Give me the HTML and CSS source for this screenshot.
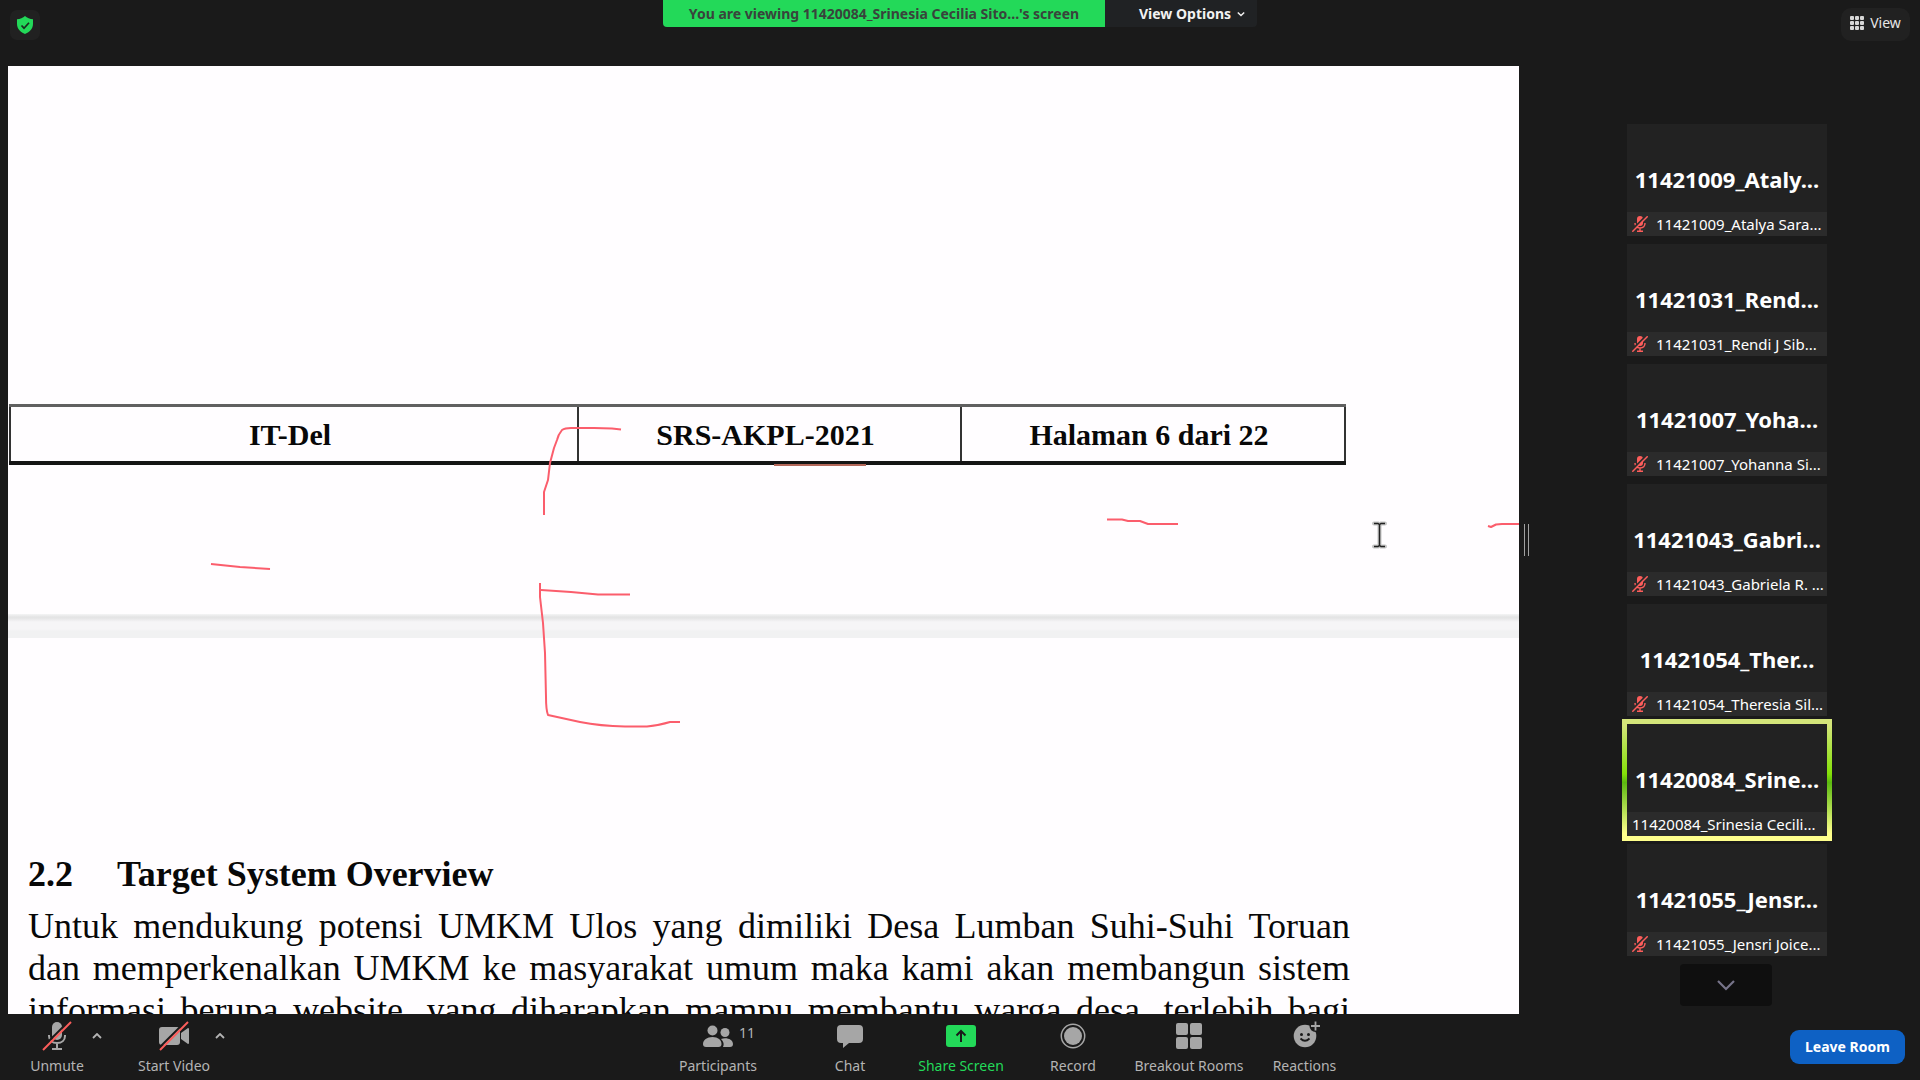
FILE: index.html
```html
<!DOCTYPE html>
<html lang="en">
<head>
<meta charset="utf-8">
<meta name="viewport" content="width=device-width, initial-scale=1">
<title>Meeting</title>
<link rel="stylesheet" href="styles.css">
</head>
<body>
<svg class="defs" aria-hidden="true">
  <symbol id="muted" viewBox="0 0 16 16">
    <rect x="5" y="0" width="6" height="10" rx="3" fill="#fc5d5b"/>
    <path d="M3 7c0 3 2 5 5 5s5-2 5-5M8 12v3M5 15.2h6" fill="none" stroke="#fc5d5b" stroke-width="1.4"/>
    <path d="M-1 15L15-1" stroke="#2b2b2b" stroke-width="2"/>
    <path d="M.3 15.7L15.7.3" stroke="#fc5d5b" stroke-width="1.5"/>
  </symbol>
  <symbol id="caret" viewBox="0 0 10 6">
    <path d="M1 5l4-4 4 4" fill="none" stroke="currentColor" stroke-width="1.8"/>
  </symbol>
</svg>

<header class="topbar">
  <button class="shield" type="button" aria-label="Meeting information">
    <svg width="16" height="18" viewBox="0 0 16 18"><path d="M8 0C10 2 13 3 16 3.3V8c0 5-4 8.500-8 10C4 16.500 0 13 0 8V3.300C3 3 6 2 8 0z" fill="#23d959"/><path d="M4.500 9.500l2.500 2.700 5-5.500" fill="none" stroke="#1a2a1e" stroke-width="1.700"/></svg>
  </button>
  <div class="banner">
    <div class="banner-text">You are viewing 11420084_Srinesia Cecilia Sito...'s screen</div>
    <button class="banner-options" type="button">View Options
      <svg class="flip" width="8" height="6"><use href="#caret"/></svg>
    </button>
  </div>
  <button class="view" type="button">
    <svg width="14" height="14" viewBox="0 0 14 14" fill="#d6d6d6"><rect width="4" height="4" rx="1"/><rect x="5" width="4" height="4" rx="1"/><rect x="10" width="4" height="4" rx="1"/><rect y="5" width="4" height="4" rx="1"/><rect x="5" y="5" width="4" height="4" rx="1"/><rect x="10" y="5" width="4" height="4" rx="1"/><rect y="10" width="4" height="4" rx="1"/><rect x="5" y="10" width="4" height="4" rx="1"/><rect x="10" y="10" width="4" height="4" rx="1"/></svg>
    View
  </button>
</header>

<main class="stage">
  <section class="shared" aria-label="Shared screen">
    <div class="page-end">
      <table class="footer-table">
        <tr><td class="org">IT-Del</td><td class="code">SRS-AKPL-2021</td><td>Halaman 6 dari 22</td></tr>
      </table>
    </div>
    <div class="page-gap"></div>
    <article class="page-start">
      <h2 class="heading"><span>2.2</span><span>Target System Overview</span></h2>
      <p class="para">
        <span class="line">Untuk mendukung potensi UMKM Ulos yang dimiliki Desa Lumban Suhi-Suhi Toruan</span>
        <span class="line">dan memperkenalkan UMKM ke masyarakat umum maka kami akan membangun sistem</span>
        <span class="line">informasi berupa website, yang diharapkan mampu membantu warga desa, terlebih bagi</span>
      </p>
    </article>
    <svg class="ink" width="1511" height="948" viewBox="8 66 1511 948" aria-hidden="true">
      <g fill="none" stroke="#fb5d6c" stroke-width="2" stroke-linejoin="round">
        <path d="M621 429.500L612 428.500L594 428H571Q565 428 562 430Q558 435 557 440L554 448L550 463L548 480L544 492V515"/>
        <path d="M211 564L240 567L270 569"/>
        <path d="M630 594.500H598L571 592L541 590"/>
        <path d="M540 583V597L543 623L545 653L546 697Q546 710 548 715L580 722Q600 726 625 726.500H647Q660 725 670 722H680"/>
        <path d="M1107 519.500H1122L1128 521H1140L1148 524H1178"/>
        <path d="M1488 526L1491 527L1496 524.500L1502 524H1519"/>
        <path d="M774 465H866" stroke="#b4685a"/>
      </g>
      <path d="M1374 523.500h4l1.500 1.500 1.500-1.500h4M1379.500 525v20M1374 546.500h4l1.500-1.500 1.500 1.500h4" fill="none" stroke="#c4c4c4" stroke-width="4" stroke-linecap="round"/>
      <path d="M1374 523.500h4l1.500 1 1.500-1h4M1379.500 524v22M1374 546.500h4l1.500-1 1.500 1h4" fill="none" stroke="#222" stroke-width="1.500"/>
    </svg>
  </section>
  <div class="splitter"><span></span></div>
  <aside class="gallery" aria-label="Participants">
    <div class="tile"><div class="name">11421009_Ataly...</div><div class="label"><svg width="16" height="16"><use href="#muted"/></svg>11421009_Atalya Sara...</div></div>
    <div class="tile"><div class="name">11421031_Rend...</div><div class="label"><svg width="16" height="16"><use href="#muted"/></svg>11421031_Rendi J Sib...</div></div>
    <div class="tile"><div class="name">11421007_Yoha...</div><div class="label"><svg width="16" height="16"><use href="#muted"/></svg>11421007_Yohanna Si...</div></div>
    <div class="tile"><div class="name">11421043_Gabri...</div><div class="label"><svg width="16" height="16"><use href="#muted"/></svg>11421043_Gabriela R. ...</div></div>
    <div class="tile"><div class="name">11421054_Ther...</div><div class="label"><svg width="16" height="16"><use href="#muted"/></svg>11421054_Theresia Sil...</div></div>
    <div class="tile active"><div class="name">11420084_Srine...</div><div class="label">11420084_Srinesia Cecili...</div></div>
    <div class="tile"><div class="name">11421055_Jensr...</div><div class="label"><svg width="16" height="16"><use href="#muted"/></svg>11421055_Jensri Joice...</div></div>
    <button class="more" type="button" aria-label="Next participants">
      <svg width="18" height="11" viewBox="0 0 18 11"><path d="M1 1l8 8 8-8" fill="none" stroke="#77748a" stroke-width="2.200"/></svg>
    </button>
  </aside>
</main>

<footer class="toolbar">
  <div class="tools-left">
    <button class="tool" type="button">
      <svg width="30" height="30" viewBox="0 0 30 30"><rect x="10" y="1" width="10" height="18" rx="5" fill="#a6a6a6"/><path d="M7 14v1c0 4 3 7 8 7s8-3 8-7v-1M15 22v5M10 28h10" fill="none" stroke="#a6a6a6" stroke-width="2"/><path d="M-1 28L28-1" stroke="#1a1a1a" stroke-width="2"/><path d="M1 29L29 1" stroke="#fc5d5b" stroke-width="2"/></svg>
      Unmute
    </button>
    <button class="arrow" type="button" aria-label="Audio options"><svg width="10" height="6"><use href="#caret"/></svg></button>
    <button class="tool video" type="button">
      <svg width="32" height="30" viewBox="0 0 32 30"><rect x="1" y="6" width="21" height="18" rx="3" fill="#a6a6a6"/><path d="M23 12l7-5q1 0 1 1v14q0 1-1 1l-7-5z" fill="#a6a6a6"/><path d="M0 28L28 0" stroke="#1a1a1a" stroke-width="2"/><path d="M2 29L30 1" stroke="#fc5d5b" stroke-width="2"/></svg>
      Start Video
    </button>
    <button class="arrow" type="button" aria-label="Video options"><svg width="10" height="6"><use href="#caret"/></svg></button>
  </div>
  <div class="tools-main">
    <button class="tool" type="button">
      <svg width="30" height="30" viewBox="0 0 30 30" fill="#a6a6a6"><circle cx="9.500" cy="9.500" r="5"/><circle cx="22" cy="11.500" r="4.500"/><path d="M0 23c0-4 4-7 9.500-7s9 3 9 7c0 2-1 3-3 3H3c-2 0-3-1-3-3z"/><path d="M18 18c5-2 12 0 12 5 0 2-1 3-3 3h-7q2-4-2-8z"/></svg>
      Participants
      <span class="count">11</span>
    </button>
    <button class="tool" type="button">
      <svg width="26" height="30" viewBox="0 0 26 30" fill="#a6a6a6"><path d="M4 4h18q4 0 4 4v10q0 4-4 4H12l-6 5v-5H4q-4 0-4-4V8q0-4 4-4z"/></svg>
      Chat
    </button>
    <button class="tool share" type="button">
      <svg width="30" height="30" viewBox="0 0 30 30"><rect y="4" width="30" height="22" rx="3" fill="#23d959"/><path d="M15 21V11M10.500 14.500L15 10l4.500 4.500" fill="none" stroke="#1a1a1a" stroke-width="2"/></svg>
      Share Screen
    </button>
    <button class="tool" type="button">
      <svg width="26" height="30" viewBox="0 0 26 30"><circle cx="13" cy="15" r="11.700" fill="none" stroke="#a6a6a6" stroke-width="1.500"/><circle cx="13" cy="15" r="9" fill="#a6a6a6"/></svg>
      Record
    </button>
    <button class="tool" type="button">
      <svg width="26" height="30" viewBox="0 0 26 30" fill="#a6a6a6"><rect y="2" width="12" height="12" rx="2"/><rect x="14" y="2" width="12" height="12" rx="2"/><rect y="16" width="12" height="12" rx="2"/><rect x="14" y="16" width="12" height="12" rx="2"/></svg>
      Breakout Rooms
    </button>
    <button class="tool" type="button">
      <svg width="30" height="30" viewBox="0 0 30 30"><circle cx="15" cy="15" r="11.300" fill="#a6a6a6"/><circle cx="25.500" cy="5" r="6" fill="#1a1a1a"/><path d="M25.500.5v9M21 5h9" stroke="#a6a6a6" stroke-width="1.800"/><circle cx="11.500" cy="13.500" r="1.500" fill="#1a1a1a"/><circle cx="18.500" cy="13.500" r="1.500" fill="#1a1a1a"/><path d="M10.500 17.500q4.500 4.500 9 0" fill="none" stroke="#1a1a1a" stroke-width="1.800"/></svg>
      Reactions
    </button>
  </div>
  <button class="leave" type="button">Leave Room</button>
</footer>
</body>
</html>
```
FILE: styles.css
```css
* { box-sizing: border-box; }

body {
  margin: 0;
  height: 100vh;
  display: flex;
  flex-direction: column;
  overflow: hidden;
  background: #1a1a1a;
  color: #fff;
  font-family: "Noto Sans", "Open Sans", sans-serif;
  font-size: 14px;
}

button {
  border: 0;
  margin: 0;
  padding: 0;
  background: none;
  color: inherit;
  font: inherit;
  cursor: pointer;
}

svg { display: block; flex: none; }

.defs { position: absolute; width: 0; height: 0; }

/* Top bar */
.topbar {
  height: 66px;
  flex: none;
  display: grid;
  grid-template-columns: 1fr auto 1fr;
  align-items: start;
  padding: 0 10px;
}

.shield {
  width: 30px;
  height: 30px;
  margin-top: 10px;
  border-radius: 7px;
  background: #212121;
  display: flex;
  align-items: center;
  justify-content: center;
}

.banner {
  display: flex;
  height: 27px;
  line-height: 27px;
  font-weight: 700;
  border-radius: 0 0 4px 4px;
  overflow: hidden;
}

.banner-text {
  width: 442px;
  text-align: center;
  white-space: nowrap;
  background: #23d959;
  color: #39433c;
}

.banner-options {
  width: 152px;
  padding-left: 22px;
  display: flex;
  align-items: center;
  justify-content: center;
  gap: 6px;
  background: #202224;
  color: #f2f2f2;
}

.flip { transform: rotate(180deg); }

.view {
  justify-self: end;
  width: 69px;
  height: 33px;
  margin-top: 8px;
  padding: 0 0 4px;
  border-radius: 10px;
  background: #212121;
  color: #e6e6e6;
  display: flex;
  align-items: center;
  justify-content: center;
  gap: 6px;
}

/* Shared document */
.stage {
  flex: 1;
  min-height: 0;
  display: flex;
  padding-left: 8px;
}

.shared {
  position: relative;
  flex: 1;
  min-width: 0;
  overflow: hidden;
  background: #fffdff;
  color: #080808;
  font-family: "Liberation Serif", serif;
}

.page-end {
  height: 548px;
  padding: 338px 173px 0 1px;
}

.footer-table {
  width: 100%;
  height: 61px;
  border-collapse: collapse;
  table-layout: fixed;
  font-size: 30px;
  font-weight: 700;
  text-align: center;
}

.footer-table td {
  padding: 2px 8px 0 0;
  border: 2px solid #333;
  border-top: 3px solid #606060;
  border-bottom: 4px solid #151515;
}

.footer-table .org { width: 568px; }
.footer-table .code { width: 383px; }

.page-gap {
  height: 24px;
  background: linear-gradient(#f4f4f5, #e4e4e5 3px, #e4e4e5 4px, #f6f5f7 8px, #f6f5f7 15px, #f1f1f2 17px);
}

.page-start { padding: 212px 169px 0 20px; }

.heading {
  margin: 0;
  display: flex;
  gap: 44px;
  font-size: 36px;
  line-height: 48px;
}

.para {
  margin: 7px 0 0;
  font-size: 36px;
  line-height: 42px;
}

.line {
  display: block;
  white-space: nowrap;
  text-align: justify;
  text-align-last: justify;
}

.ink { position: absolute; left: 0; top: 0; }

.splitter {
  width: 16px;
  display: flex;
  align-items: center;
  padding-left: 5px;
}

.splitter span {
  width: 5px;
  height: 32px;
  border: 1px solid #a0a0a0;
  border-width: 0 1px;
}

/* Participant tiles */
.gallery {
  width: 385px;
  padding: 58px 1px 0 0;
  display: flex;
  flex-direction: column;
  align-items: center;
  gap: 8px;
}

.tile {
  position: relative;
  width: 200px;
  height: 112px;
  flex: none;
  display: flex;
  flex-direction: column;
  background: #222;
}

.name {
  height: 88px;
  padding-top: 24px;
  line-height: 62px;
  font-size: 22px;
  font-weight: 700;
  text-align: center;
  white-space: nowrap;
}

.label {
  height: 24px;
  padding: 0 5px;
  display: flex;
  align-items: center;
  gap: 8px;
  background: #2b2b2b;
  font-size: 15px;
  white-space: nowrap;
}

.active::before {
  content: "";
  position: absolute;
  inset: -5px;
  z-index: -1;
  background: linear-gradient(#d4e57a 5%, #84e008 45%, #5cba10 52%, #ffff8c 94%);
}

.more {
  width: 92px;
  height: 42px;
  margin-right: 2px;
  flex: none;
  border-radius: 4px;
  background: #0f0f0f;
  display: flex;
  align-items: center;
  justify-content: center;
}

/* Bottom toolbar */
.toolbar {
  height: 66px;
  flex: none;
  display: grid;
  grid-template-columns: minmax(240px, 638fr) 719px minmax(140px, 563fr);
  color: #b4b4b4;
}

.tools-left {
  display: flex;
  align-items: flex-start;
  padding-left: 24px;
}

.tools-main {
  display: grid;
  grid-template-columns: 160px 104px 118px 106px 126px 105px;
}

.tool {
  position: relative;
  height: 66px;
  min-width: 66px;
  padding-top: 7px;
  display: flex;
  flex-direction: column;
  align-items: center;
  gap: 5px;
  line-height: 20px;
  white-space: nowrap;
}

.tool.video { min-width: 78px; margin-left: 31px; }

.arrow {
  width: 14px;
  height: 44px;
  display: flex;
  align-items: center;
  justify-content: center;
}

.count {
  position: absolute;
  left: 101px;
  top: 9px;
}

.share { color: #23d959; }

.leave {
  justify-self: end;
  width: 115px;
  height: 34px;
  margin: 16px 15px 0 0;
  padding-bottom: 2px;
  border-radius: 9px;
  background: #0e61c4;
  color: #fff;
  font-weight: 700;
}
```
